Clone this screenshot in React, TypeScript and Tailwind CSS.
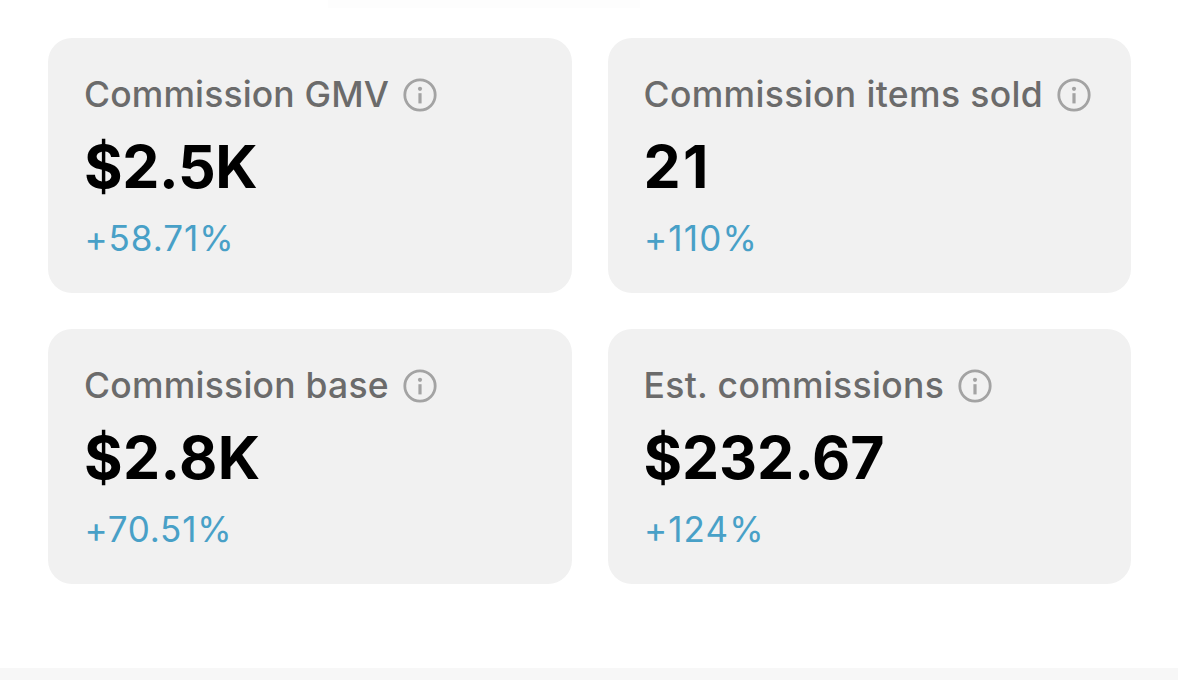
const cards = [
  { title: "Commission GMV", value: "$2.5K", change: "+58.71%", titleGap: "tracking-[0.14px]", valueGap: "tracking-[-0.4px]", changeGap: "tracking-[0.95px]" },
  { title: "Commission items sold", value: "21", change: "+110%", titleGap: "tracking-[0.36px]", valueGap: "tracking-[2.4px]", changeGap: "tracking-[1.2px]" },
  { title: "Commission base", value: "$2.8K", change: "+70.51%", titleGap: "tracking-[0.24px]", valueGap: "tracking-[0.4px]", changeGap: "tracking-[0.8px]" },
  { title: "Est. commissions", value: "$232.67", change: "+124%", titleGap: "tracking-[0.32px]", valueGap: "tracking-[-0.1px]", changeGap: "tracking-[1.1px]" },
];

function InfoIcon() {
  return (
    <svg className="ml-[14px] size-[34px] shrink-0" viewBox="0 0 34 34" fill="none">
      <circle cx="17" cy="17" r="15.2" stroke="#a3a3a3" strokeWidth="2.8" />
      <circle cx="17" cy="10.8" r="2.1" fill="#a3a3a3" />
      <path d="M17 15.2v10.2" stroke="#a3a3a3" strokeWidth="3.2" />
    </svg>
  );
}

export default function App() {
  return (
    <div className="flex h-[680px] w-[1178px] flex-col overflow-hidden bg-white font-['Inter',sans-serif]">
      <div className="ml-[328px] h-[8px] w-[312px] bg-[#fdfdfd]" />
      <div className="ml-[48px] mt-[30px] grid w-[1083px] grid-cols-2 gap-[36px]">
        {cards.map((c) => (
          <section key={c.title} className="flex h-[255px] flex-col rounded-[24px] bg-[#f1f1f1] pl-[36px] pt-[36px]">
            <div className="flex h-[42px] items-center">
              <h2 className={`whitespace-nowrap text-[35.5px] font-medium leading-[42px] text-[#6b6b6b] ${c.titleGap}`}>{c.title}</h2>
              <InfoIcon />
            </div>
            <p className={`mt-[19px] text-[59px] font-bold leading-[64px] text-black ${c.valueGap}`}>{c.value}</p>
            <p className={`mt-[16px] pl-[0.5px] text-[35px] leading-[46px] text-[#48a0c7] ${c.changeGap}`}>{c.change}</p>
          </section>
        ))}
      </div>
      <div className="mt-auto h-[12px] bg-[#f7f7f7]" />
    </div>
  );
}
